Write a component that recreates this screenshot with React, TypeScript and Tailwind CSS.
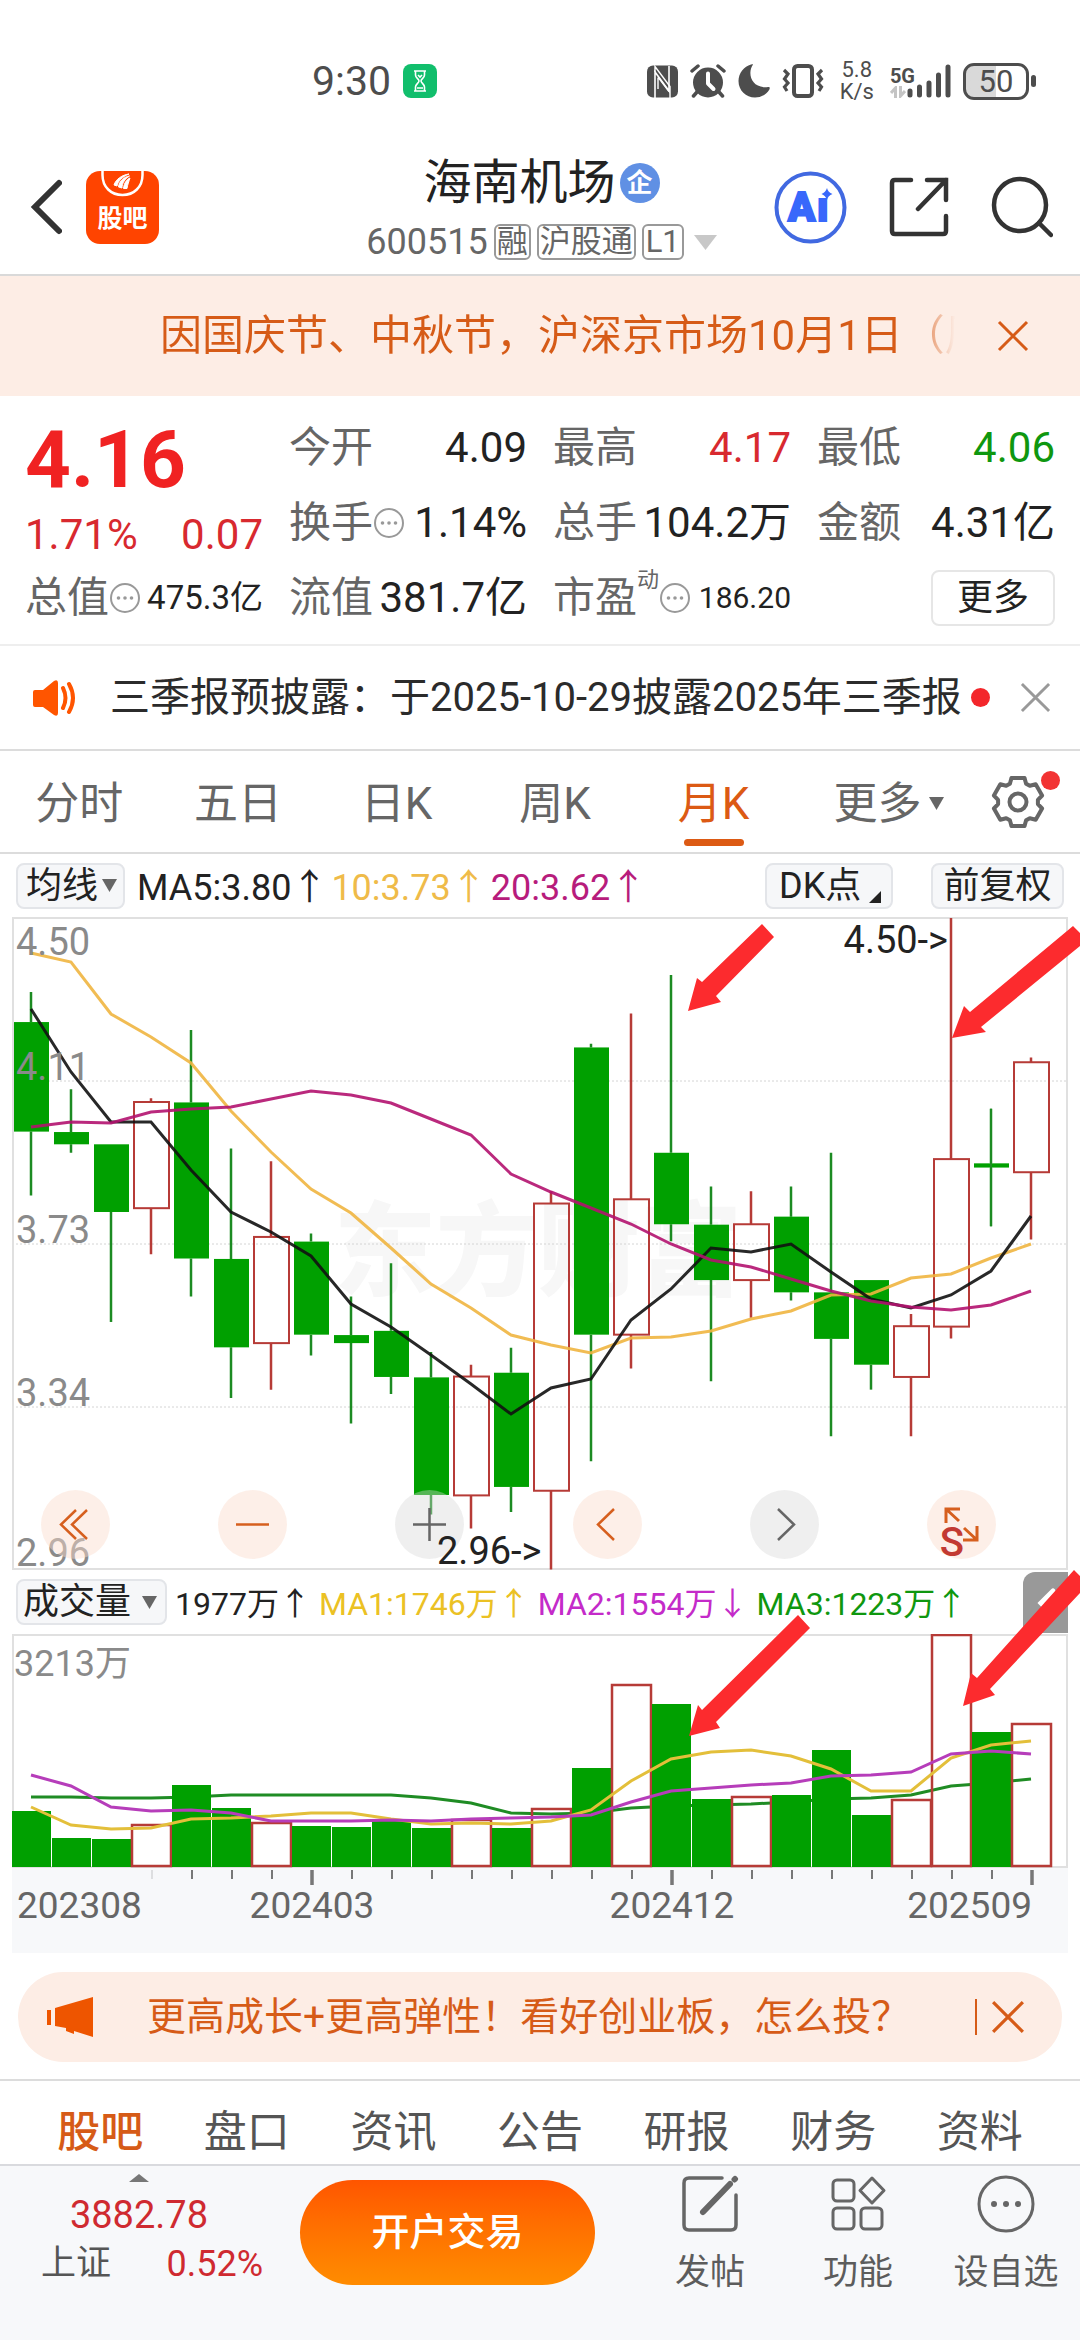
import React from "react";

type Candle = [number, number, number, number, boolean];

// [high, body top, body bottom, low, rising]
const CANDLES: Candle[] = [
  [4.325, 4.254, 3.995, 3.844, false],
  [4.095, 3.994, 3.965, 3.945, false],
  [3.965, 3.965, 3.805, 3.545, false],
  [4.074, 4.065, 3.814, 3.705, true],
  [4.235, 4.064, 3.695, 3.605, false],
  [3.955, 3.694, 3.485, 3.365, false],
  [3.925, 3.746, 3.495, 3.385, true],
  [3.754, 3.735, 3.515, 3.466, false],
  [3.605, 3.514, 3.495, 3.305, false],
  [3.684, 3.524, 3.415, 3.375, false],
  [3.474, 3.414, 3.136, 3.09, false],
  [3.444, 3.416, 3.135, 3.057, true],
  [3.484, 3.425, 3.155, 3.096, false],
  [3.854, 3.825, 3.146, 2.96, true],
  [4.203, 4.194, 3.515, 3.216, false],
  [4.274, 3.835, 3.515, 3.435, true],
  [4.365, 3.945, 3.776, 3.736, false],
  [3.865, 3.775, 3.644, 3.405, false],
  [3.854, 3.776, 3.644, 3.555, true],
  [3.865, 3.794, 3.615, 3.596, false],
  [3.945, 3.615, 3.505, 3.275, false],
  [3.644, 3.644, 3.444, 3.385, false],
  [3.564, 3.535, 3.415, 3.275, true],
  [4.5, 3.93, 3.534, 3.506, true],
  [4.049, 3.92, 3.91, 3.771, false],
  [4.17, 4.159, 3.899, 3.74, true],
];

const MA5 = [92, 155, 205, 205, 253, 295, 315, 339, 387, 410, 438, 467, 497, 471, 462, 403, 372, 331, 335, 327, 355, 382, 391, 378, 354, 299];
const MA10 = [36, 45, 97, 120, 146, 194, 235, 272, 296, 331, 367, 391, 418, 428, 436, 421, 420, 414, 402, 394, 378, 377, 361, 357, 341, 327];
const MA20 = [210, 205, 206, 195, 192, 190, 182, 174, 178, 186, 202, 218, 257, 275, 291, 307, 327, 343, 350, 362, 374, 384, 390, 393, 388, 374];

const VOLUMES = [56, 29, 28, 42, 82, 59, 44, 41, 40, 48, 39, 47, 39, 58, 99, 182, 163, 68, 70, 72, 117, 52, 67, 232, 135, 143];
const VMA1 = [173, 191, 195, 194, 185, 184, 182, 179, 179, 185, 190, 189, 190, 187, 176, 147, 125, 118, 116, 122, 135, 157, 157, 124, 111, 107];
const VMA2 = [141, 152, 173, 177, 176, 179, 187, 187, 187, 186, 187, 185, 184, 183, 181, 168, 157, 154, 151, 149, 142, 141, 138, 120, 117, 120];
const VMA3 = [163, 163, 164, 164, 163, 161, 161, 161, 161, 161, 164, 169, 179, 180, 179, 174, 172, 171, 170, 168, 165, 164, 161, 152, 149, 145];

const GREEN = "#00a000";
const WICK_GREEN = "#1c8b22";
const RED = "#b63b37";

const cx = (i: number) => 19 + 40 * i;
const py = (price: number) => 1 + (4.5 - price) * 423;
const line = (ys: number[]) => ys.map((y, i) => `${cx(i)},${y}`).join(" ");

function Arrow({ down = false }: { down?: boolean }) {
  return <span className="font-['Noto_Sans_CJK_SC']">{down ? "↓" : "↑"}</span>;
}

function Triangle({ className }: { className: string }) {
  return (
    <svg viewBox="0 0 16 14" preserveAspectRatio="none" className={className} aria-hidden="true">
      <path d="M0 0H16L8 14Z" fill="currentColor" />
    </svg>
  );
}

function Cross({ className, width = 3 }: { className: string; width?: number }) {
  return (
    <svg viewBox="0 0 32 32" className={className} fill="none" stroke="currentColor" strokeWidth={width} aria-hidden="true">
      <path d="M2 2L30 30M30 2L2 30" />
    </svg>
  );
}

function Info() {
  return (
    <svg viewBox="0 0 32 32" className="size-8 shrink-0 text-[#999999]" aria-hidden="true">
      <circle cx="16" cy="16" r="14" fill="none" stroke="currentColor" strokeWidth="2" />
      <circle cx="9.500" cy="16" r="1.800" fill="currentColor" />
      <circle cx="16" cy="16" r="1.800" fill="currentColor" />
      <circle cx="22.500" cy="16" r="1.800" fill="currentColor" />
    </svg>
  );
}

function StatusBar() {
  return (
    <div className="flex h-[140px] items-center justify-between pt-[22px] pr-[44px] pl-[312px] text-[#4d4d4d]">
      <div className="flex items-center gap-3">
        <span className="text-[41px] leading-none">9:30</span>
        <svg viewBox="0 0 34 34" className="size-[34px]" aria-hidden="true">
          <rect width="34" height="34" rx="8" fill="#11be6c" />
          <g fill="none" stroke="#fff" strokeWidth="1.600">
            <path d="M11 7H23M11 27H23M12.500 7V11C12.500 14 16 15 16 17C16 19 12.500 20 12.500 23V27M21.500 7V11C21.500 14 18 15 18 17C18 19 21.500 20 21.500 23V27" />
            <path d="M15 11L17 13L19 11M14 24H20" />
          </g>
        </svg>
      </div>
      <div className="flex items-center gap-3">
        <svg viewBox="0 0 31 33" className="h-[33px] w-[31px]" aria-hidden="true">
          <rect y="0.500" width="31" height="32" rx="6" fill="currentColor" />
          <path d="M8 33V7L22 26V1" fill="none" stroke="#fff" strokeWidth="1.600" />
          <path d="M8 7V1.500L23 21.500V33M11 13V24M11 12L22 26.500" fill="none" stroke="#fff" strokeWidth="1.400" />
        </svg>
        <svg viewBox="0 0 36 34" className="h-[34px] w-9" aria-hidden="true">
          <circle cx="18" cy="18.500" r="15" fill="currentColor" />
          <g fill="none" stroke="currentColor" strokeWidth="3.500" strokeLinecap="round">
            <path d="M2 7L8 2M34 7L28 2M7 28L3.500 32M29 28L32.500 32" />
          </g>
          <path d="M18 9.500V19.500L23.500 25" fill="none" stroke="#fff" strokeWidth="4" strokeLinecap="round" strokeLinejoin="round" />
        </svg>
        <svg viewBox="0 0 32 34" className="h-[34px] w-8" aria-hidden="true">
          <path d="M15 0.500C9 9 13 25 30 23C32 22.700 32 24 31.400 25.500C28 31 22.500 33.500 17 33.500C8 33.500 0.500 26.500 0.500 17C0.500 9 6 2.500 13 0.500C14.500 0 15.500 0 15 0.500Z" fill="currentColor" />
        </svg>
        <svg viewBox="0 0 42 34" className="h-[34px] w-[42px]" fill="none" stroke="currentColor" aria-hidden="true">
          <rect x="12" y="2" width="18" height="30" rx="3.500" strokeWidth="4" />
          <path d="M2 6L6 10L2.500 15L6 19L2.500 23L5 27M40 6L36 10L39.500 15L36 19L39.500 23L37 27" strokeWidth="3.200" />
        </svg>
        <div className="mx-1 flex flex-col items-center text-[22px] leading-[22px]">
          <span>5.8</span>
          <span>K/s</span>
        </div>
        <div className="flex items-end">
          <div className="flex flex-col">
            <span className="text-[20px] leading-5 font-bold">5G</span>
            <svg viewBox="0 0 16 12" className="h-3 w-4" fill="none" stroke="#c4c4c4" strokeWidth="3" aria-hidden="true">
              <path d="M1 7L5.500 2V12M10.500 0V10L15 5" />
            </svg>
          </div>
          <svg viewBox="0 0 44 34" className="-ml-2 h-[34px] w-11" stroke="currentColor" strokeWidth="5" strokeLinecap="round" aria-hidden="true">
            <path d="M3 27V31M12.500 23V31M22 19V31M31.500 11V31M41 3V31" />
          </svg>
        </div>
        <div className="flex items-center gap-[2px]">
          <div className="flex h-[37px] w-[66px] items-center justify-center rounded-[11px] border-[3px] border-[#4d4d4d] bg-linear-to-r from-[#d9d9d9] from-50% to-white to-50% text-[31px] leading-none">
            50
          </div>
          <span className="h-3 w-[5px] rounded-full bg-[#4d4d4d]" />
        </div>
      </div>
    </div>
  );
}

function Header() {
  return (
    <header className="grid h-[136px] grid-cols-[1fr_auto_1fr] items-center border-b-2 border-[#d9d9d9] pr-[27px] pl-[30px]">
      <div className="flex items-center gap-[24px]">
        <button aria-label="返回">
          <svg viewBox="0 0 32 56" className="h-14 w-8" fill="none" stroke="#333" strokeWidth="6" strokeLinecap="round" aria-hidden="true">
            <path d="M29 4L5 28L29 52" />
          </svg>
        </button>
        <a href="#guba" aria-label="股吧">
          <svg viewBox="0 0 73 73" className="size-[73px]" aria-hidden="true">
            <rect width="73" height="73" rx="14" fill="#ff4400" />
            <path d="M16.500 0V4C16.500 16 25 24 36.500 24C48 24 56.500 16 56.500 4V0" fill="none" stroke="#fff" strokeWidth="2.500" />
            <path d="M28 14C30 8 36 4 43 3C36 6 32 10 31 15ZM32.500 16C33 10 38 6 43.500 5C39 8 36 12 36 17ZM37.500 17.500C38 12 41 8 44 7C43 10 41.500 14 41 17.500Z" fill="#fff" stroke="#fff" />
            <text x="36.500" y="56" textAnchor="middle" fontSize="25" fontWeight="700" fill="#fff">股吧</text>
          </svg>
        </a>
      </div>
      <div className="flex flex-col items-center pt-3">
        <div className="flex h-[58px] items-center gap-1 text-[#222222]">
          <h1 className="text-[48px] leading-[56px]">海南机场</h1>
          <span className="flex size-10 items-center justify-center rounded-full bg-[#6090e4] text-[26px] leading-none font-bold text-white">企</span>
        </div>
        <button className="flex h-[60px] items-center gap-[6px] text-[32px] leading-9 text-[#666666]">
          <span className="text-[36px]">600515</span>
          <span className="h-9 rounded-md border-2 border-[#999999] px-px text-[31px] leading-8">融</span>
          <span className="h-9 rounded-md border-2 border-[#999999] px-px text-[31px] leading-8">沪股通</span>
          <span className="h-9 rounded-md border-2 border-[#999999] px-[2px] text-[31px] leading-8">L1</span>
          <Triangle className="ml-1 h-[15px] w-[23px] text-[#c8c8c8]" />
        </button>
      </div>
      <div className="flex items-center justify-end gap-[42px]">
        <button aria-label="Ai">
          <svg viewBox="0 0 73 73" className="size-[73px]" aria-hidden="true">
            <circle cx="36.500" cy="36.500" r="34" fill="#fff" stroke="#4169e1" strokeWidth="4" />
            <g fill="#3868fb" stroke="#3868fb" strokeWidth="2" fontSize="40" fontWeight="900">
              <text x="14" y="50">A</text>
              <text x="43" y="50">ı</text>
            </g>
            <path d="M53 17Q54 21.500 58.500 23Q54 24.500 53 29Q51.500 24.500 47.500 23Q51.500 21.500 53 17Z" fill="#3868fb" />
          </svg>
        </button>
        <button aria-label="分享">
          <svg viewBox="0 0 60 60" className="size-[60px]" fill="none" stroke="#333" strokeWidth="4.500" strokeLinecap="round" aria-hidden="true">
            <path d="M22 3H6Q3 3 3 6V54Q3 57 6 57H54Q57 57 57 54V39M38 3H57V23M57 3L29 32" />
          </svg>
        </button>
        <button aria-label="搜索">
          <svg viewBox="0 0 62 62" className="size-[62px]" fill="none" stroke="#333" strokeWidth="4.500" strokeLinecap="round" aria-hidden="true">
            <circle cx="29" cy="29" r="26" />
            <path d="M48 47L60 59" />
          </svg>
        </button>
      </div>
    </header>
  );
}

function Holiday() {
  return (
    <div className="flex h-[120px] items-center bg-[#fdede5] pr-[51px] pl-[160px] text-[#d65b17]">
      <p className="min-w-0 flex-1 overflow-hidden bg-linear-to-r from-[#d65b17] from-94% to-transparent to-100% bg-clip-text text-[42px] leading-[60px] whitespace-nowrap text-transparent">
        因国庆节、中秋节，沪深京市场10月1日（周三）
      </p>
      <button aria-label="关闭" className="ml-[42px]">
        <Cross className="size-8" />
      </button>
    </div>
  );
}

function Stat({ label, value, info, tone = "text-[#222222]", size = "text-[42px]", sup }: { label: string; value: string; info?: boolean; tone?: string; size?: string; sup?: string }) {
  return (
    <div className="flex h-[75px] items-center justify-between whitespace-nowrap">
      <dt className="flex items-center text-[42px] text-[#666666]">
        {label}
        {sup && <span className="mb-9 text-[22px]">{sup}</span>}
        {info && <Info />}
      </dt>
      <dd className={`${size} ${tone}`}>{value}</dd>
    </div>
  );
}

function Quote() {
  return (
    <dl className="grid grid-cols-4 gap-x-[26px] border-b-2 border-[#eeeeee] pt-[14px] pr-[25px] pb-[9px] pl-[25px] leading-none">
      <div className="row-span-2 flex flex-col">
        <dt className="flex h-[100px] items-center text-[80px] font-bold text-[#f02222]">4.16</dt>
        <dd className="flex h-[50px] items-center justify-between text-[42px] text-[#d8292f]">
          <span>1.71%</span>
          <span>0.07</span>
        </dd>
      </div>
      <Stat label="今开" value="4.09" />
      <Stat label="最高" value="4.17" tone="text-[#d8292f]" />
      <Stat label="最低" value="4.06" tone="text-[#0f970f]" />
      <Stat label="换手" value="1.14%" info />
      <Stat label="总手" value="104.2万" />
      <Stat label="金额" value="4.31亿" />
      <Stat label="总值" value="475.3亿" info size="text-[33px]" />
      <Stat label="流值" value="381.7亿" />
      <Stat label="市盈" value="186.20" info sup="动" size="text-[30px]" />
      <div className="flex h-[75px] items-center justify-end">
        <button className="h-14 w-[124px] rounded-lg border-2 border-[#e6e6e6] text-[36px] text-[#222222]">更多</button>
      </div>
    </dl>
  );
}

function Notice() {
  return (
    <div className="flex h-[105px] items-center border-b-2 border-[#dcdcdc] pr-[29px] pl-[32px]">
      <svg viewBox="0 0 46 38" className="h-[38px] w-[46px] shrink-0" aria-hidden="true">
        <path d="M3 11H11L22 2Q26 0 26 4V34Q26 38 22 36L11 28H3Q1 28 1 26V13Q1 11 3 11Z" fill="#ff5500" />
        <path d="M31 9Q36 19 31 29M37 5Q45 19 37 33" fill="none" stroke="#ff5500" strokeWidth="4" strokeLinecap="round" />
      </svg>
      <a href="#report" className="ml-8 min-w-0 flex-1 text-[40px] leading-[60px] whitespace-nowrap text-[#2b2b2b]">
        三季报预披露：于2025-10-29披露2025年三季报
      </a>
      <span className="mr-[30px] size-[19px] shrink-0 rounded-full bg-[#f3262b]" />
      <button aria-label="关闭">
        <Cross className="size-[31px] text-[#999999]" />
      </button>
    </div>
  );
}

const gear = Array.from({ length: 6 }, (_, k) =>
  [[20, -24], [25, -15], [25, 15], [20, 24]].map(([r, d]) => {
    const a = ((k * 60 - 90 + d) * Math.PI) / 180;
    return `${(28 + r * Math.cos(a)).toFixed(1)},${(28 + r * Math.sin(a)).toFixed(1)}`;
  }).join(" ")
).join(" ");

function PeriodTabs() {
  const tabs = ["分时", "五日", "日K", "周K", "月K"];
  return (
    <nav className="flex h-[103px] border-b-2 border-[#dcdcdc] text-[44px] text-[#666666]">
      {tabs.map((t) => (
        <button key={t} className={t === "月K" ? "relative flex-1 pt-1 text-[#dc5a14]" : "relative flex-1 pt-1"}>
          {t}
          {t === "月K" && <span className="absolute bottom-[6px] left-1/2 h-[7px] w-[60px] -translate-x-1/2 rounded-full bg-[#dc5a14]" />}
        </button>
      ))}
      <button className="flex w-[172px] items-center justify-center gap-2 pt-1 pl-5">
        更多
        <Triangle className="h-[13px] w-[15px]" />
      </button>
      <button aria-label="设置" className="relative flex w-[115px] items-center justify-center pr-2">
        <svg viewBox="0 0 56 56" className="size-14" fill="none" stroke="#666" strokeWidth="4" strokeLinejoin="round" aria-hidden="true">
          <polygon points={gear} />
          <circle cx="28" cy="28" r="8.500" />
        </svg>
        <span className="absolute top-5 right-5 size-[19px] rounded-full bg-[#f23333]" />
      </button>
    </nav>
  );
}

const chip = "h-[46px] rounded-lg border-2 border-[#e3e5e9] bg-[#f6f7f9] text-[36px] leading-[42px] text-[#222222]";

function Picker({ label, options, box, tri }: { label: string; options: string[]; box: string; tri: string }) {
  return (
    <label className="relative flex items-center">
      <select aria-label={label} className={`${chip} appearance-none ${box}`}>
        {options.map((o) => (
          <option key={o}>{o}</option>
        ))}
      </select>
      <Triangle className={`pointer-events-none absolute h-[13px] w-[15px] text-[#666666] ${tri}`} />
    </label>
  );
}

function MaRow() {
  return (
    <div className="flex h-[63px] items-center px-4 text-[36px] leading-none whitespace-nowrap">
      <Picker label="主图指标" options={["均线", "布林"]} box="w-[109px] pl-2" tri="right-[8px]" />
      <div className="ml-3 flex flex-1 gap-1">
        <span className="text-[#222222]">MA5:3.80<Arrow /></span>
        <span className="text-[#efbb49]">10:3.73<Arrow /></span>
        <span className="text-[#b71c7c]">20:3.62<Arrow /></span>
      </div>
      <button className={`${chip} flex w-[128px] items-end pl-3`}>
        DK点
        <svg viewBox="0 0 12 12" className="mb-1 ml-2 size-3" aria-hidden="true"><path d="M12 0V12H0Z" fill="#222" /></svg>
      </button>
      <button className={`${chip} ml-[38px] w-[133px] text-center`}>前复权</button>
    </div>
  );
}

const round = "flex size-[69px] items-center justify-center rounded-full";

function ChartButton({ label, warm, children }: { label: string; warm?: boolean; children: React.ReactNode }) {
  return (
    <button aria-label={label} className={warm ? `${round} bg-[#fbdccb]/45 text-[#d65f1e]` : `${round} bg-[#d8d8d8]/40 text-[#666666]`}>
      <svg viewBox="0 0 69 69" className="size-full" fill="none" stroke="currentColor" strokeWidth="2.500" aria-hidden="true">
        {children}
      </svg>
    </button>
  );
}

function PriceChart() {
  return (
    <div className="relative mx-3 text-[38px] leading-none text-[#8a8a8a]">
      <svg viewBox="0 0 1056 653" className="block w-full" role="img" aria-label="月K线">
        <text x="322" y="371" fontSize="102" fontWeight="900" fill="#f7f7f7">东方财富</text>
        <path d="M0 164H1056M0 327H1056M0 490H1056" stroke="#d4d4d4" strokeWidth="1" strokeDasharray="2 2" />
        <rect x="1" y="1" width="1054" height="651" fill="none" stroke="#e0e0e0" strokeWidth="2" />
        {CANDLES.map(([h, t, b, l, up], i) => (
          <g key={i}>
            <path d={`M${cx(i)} ${py(h)}V${py(t)}M${cx(i)} ${py(b)}V${py(l)}`} stroke={up ? RED : WICK_GREEN} strokeWidth="2.500" />
            {up ? (
              <rect x={cx(i) - 17} y={py(t)} width="35" height={py(b) - py(t)} fill="none" stroke={RED} strokeWidth="2" />
            ) : (
              <rect x={cx(i) - 17} y={py(t)} width="35" height={py(b) - py(t)} fill={GREEN} />
            )}
          </g>
        ))}
        <path d={`M${cx(24)} ${py(4.049)}V${py(3.771)}`} stroke={WICK_GREEN} strokeWidth="2" />
        <g fill="none" strokeWidth="3" strokeOpacity="0.9">
          <polyline points={line(MA10)} stroke="#efb540" />
          <polyline points={line(MA5)} stroke="#111" />
          <polyline points={line(MA20)} stroke="#b3126f" />
        </g>
      </svg>
      <span className="absolute top-[6px] left-1">4.50</span>
      <span className="absolute top-[20%] left-1">4.11</span>
      <span className="absolute top-[45%] left-1">3.73</span>
      <span className="absolute top-[70%] left-1">3.34</span>
      <span className="absolute -bottom-[2px] left-1">2.96</span>
      <div className="absolute right-[72px] bottom-[11px] left-[29px] flex justify-between">
        <ChartButton label="最早" warm><path d="M35 20L20 34.500L35 49M46 20L31 34.500L46 49" /></ChartButton>
        <ChartButton label="缩小" warm><path d="M18 34.500H51" /></ChartButton>
        <ChartButton label="放大"><path d="M18 34.500H51M34.500 18V51" /></ChartButton>
        <ChartButton label="向左" warm><path d="M41 19L25 34.500L41 50" /></ChartButton>
        <ChartButton label="向右"><path d="M28 19L44 34.500L28 50" /></ChartButton>
        <ChartButton label="全屏" warm>
          <path d="M19 33V19H33M19 19L32 31M50 36V50H36M50 50L37 38" strokeWidth="3" />
        </ChartButton>
        <span className="absolute right-[32px] -bottom-[4px] text-[40px] font-medium text-[#c23a33]">S</span>
      </div>
      <span className="absolute top-1 right-[120px] text-[#222222]">4.50-&gt;</span>
      <span className="absolute bottom-0 left-[425px] text-[#222222]">2.96-&gt;</span>
    </div>
  );
}

function VolumeHeader() {
  return (
    <div className="mx-3 flex h-16 items-center pl-1 text-[32px] leading-none whitespace-nowrap">
      <Picker label="副图指标" options={["成交量", "成交额"]} box="w-[151px] pl-[5px]" tri="right-[10px]" />
      <div className="ml-2 flex flex-1 gap-2">
        <span className="text-[#222222]">1977万<Arrow /></span>
        <span className="text-[#ebc124]">MA1:1746万<Arrow /></span>
        <span className="text-[#c42bc9]">MA2:1554万<Arrow down /></span>
        <span className="text-[#0f970f]">MA3:1223万<Arrow /></span>
      </div>
      <button aria-label="收起" className="h-[61px] w-[45px] shrink-0 rounded-tl-xl bg-[#999999]">
        <svg viewBox="0 0 45 61" className="size-full" fill="none" stroke="#fff" strokeWidth="5" strokeLinecap="round" aria-hidden="true">
          <path d="M30 19L18 31L30 43" />
        </svg>
      </button>
    </div>
  );
}

function VolumeChart() {
  return (
    <div className="relative mx-3">
      <svg viewBox="0 0 1056 234" className="block w-full" role="img" aria-label="成交量">
        <rect x="1" y="1" width="1054" height="232" fill="none" stroke="#e0e0e0" strokeWidth="2" />
        <polyline points={line(VMA3)} fill="none" stroke="#1f8c24" strokeWidth="3" />
        {VOLUMES.map((v, i) =>
          CANDLES[i][4] ? (
            <rect key={i} x={cx(i) - 19} y={233 - v} width="39" height={v - 1} fill="none" stroke={RED} strokeWidth="2.500" />
          ) : (
            <rect key={i} x={cx(i) - 19} y={233 - v} width="39" height={v} fill={GREEN} />
          )
        )}
        <g fill="none" strokeWidth="3">
          <polyline points={line(VMA1)} stroke="#e3bf3a" />
          <polyline points={line(VMA2)} stroke="#b63dba" />
        </g>
      </svg>
      <span className="absolute top-2 left-[2px] text-[36px] leading-11 text-[#8a8a8a]">3213万</span>
      <div className="relative h-[85px] bg-[#f7f8fa] text-[37px] leading-none text-[#666666]">
        <svg viewBox="0 0 1056 20" className="block w-full" stroke="#777" aria-hidden="true">
          {CANDLES.map((_, i) =>
            i < 3 ? null : i % 9 === 7 ? (
              <path key={i} d={`M${cx(i) + 1} 2V17`} strokeWidth="3.500" />
            ) : (
              <path key={i} d={`M${cx(i) + 1} 2V11`} strokeWidth="2" strokeOpacity={i === 3 ? 0.2 : 1} />
            )
          )}
        </svg>
        <span className="absolute top-[19px] left-[5px]">202308</span>
        <span className="absolute top-[19px] left-[300px] -translate-x-1/2">202403</span>
        <span className="absolute top-[19px] left-[660px] -translate-x-1/2">202412</span>
        <span className="absolute top-[19px] right-[36px]">202509</span>
      </div>
    </div>
  );
}

function Pointers() {
  return (
    <svg viewBox="0 0 1080 1036" className="pointer-events-none absolute inset-x-0 top-0 w-full" fill="#fc2b2e" aria-hidden="true">
      <path d="M688 94L697 61L702 65L762 7L774 20L716 79L721 85Z" />
      <path d="M952 121L964 89L970 95L1073 9L1080 16V29L981 110L986 115Z" />
      <path d="M689 819L698 788L702 793L798 698L810 711L716 805L720 811Z" />
      <path d="M963 789L971 756L977 761L1074 653L1080 659V676L990 772L995 778Z" />
    </svg>
  );
}

function Promo() {
  return (
    <div className="mx-[18px] mt-[19px] mb-[17px] flex h-[90px] items-center rounded-full bg-[#fdede5] pr-[37px] pl-[29px] text-[#d65b17]">
      <svg viewBox="0 0 46 40" className="h-10 w-[46px] shrink-0" fill="#ee5500" aria-hidden="true">
        <path d="M0 13H4V28H0ZM8 11L46 0V40L27 34V37L19 34V31L8 29Z" />
      </svg>
      <a href="#promo" className="ml-[54px] flex-1 text-[39px] whitespace-nowrap">更高成长+更高弹性！看好创业板，怎么投？</a>
      <span className="mr-[14px] h-9 w-[2px] bg-[#d65b17]" />
      <button aria-label="关闭">
        <Cross className="size-[34px]" />
      </button>
    </div>
  );
}

function SectionTabs() {
  const tabs = ["股吧", "盘口", "资讯", "公告", "研报", "财务", "资料"];
  return (
    <nav className="flex h-[85px] border-t-2 border-[#dcdcdc] px-[27px] pt-[19px] text-[43px] leading-[64px] text-[#555555]">
      {tabs.map((t, i) => (
        <button key={t} className={i === 0 ? "flex-1 font-medium text-[#d65b17]" : "flex-1"}>{t}</button>
      ))}
    </nav>
  );
}

function Action({ label, children }: { label: string; children: React.ReactNode }) {
  return (
    <button className="flex w-[148px] flex-col items-center gap-[15px] text-[35px] leading-[50px] whitespace-nowrap text-[#5c5c5c]">
      <svg viewBox="0 0 58 58" className="size-[58px]" fill="none" stroke="#666" strokeWidth="3" strokeLinecap="round" aria-hidden="true">
        {children}
      </svg>
      {label}
    </button>
  );
}

function BottomBar() {
  return (
    <footer className="flex min-h-[176px] flex-1 items-start border-t-2 border-[#d9dade] bg-[#f7f8fa]">
      <button className="ml-[41px] flex w-[222px] flex-col pt-2 text-[#cf2a30]">
        <Triangle className="mr-[26px] h-2 w-5 rotate-180 self-center text-[#777777]" />
        <span className="mt-[9px] mr-[26px] self-center text-[38px] leading-[48px]">3882.78</span>
        <span className="flex w-full justify-between text-[36px] leading-[50px]">
          <span className="text-[35px] text-[#555555]">上证</span>
          <span>0.52%</span>
        </span>
      </button>
      <button className="mt-[14px] ml-[37px] h-[105px] flex-1 rounded-full bg-linear-to-b from-[#ff5500] to-[#ff8c00] text-[38px] font-medium text-white">
        开户交易
      </button>
      <div className="ml-[41px] flex pt-[9px]">
        <Action label="发帖">
          <path d="M41 3H8Q3 3 3 8V50Q3 55 8 55H50Q55 55 55 50V20" strokeWidth="3.500" />
          <path d="M22 37L49 9" strokeWidth="6" />
          <path d="M53.500 4.500L54 4" strokeWidth="6" />
        </Action>
        <Action label="功能">
          <rect x="4" y="5" width="21" height="21" rx="4" />
          <rect x="4" y="33" width="21" height="21" rx="4" />
          <rect x="32" y="33" width="21" height="21" rx="4" />
          <path d="M43 3L55 15.500L43 28L31 15.500Z" strokeLinejoin="round" />
        </Action>
        <Action label="设自选">
          <circle cx="29" cy="29" r="27" />
          <path d="M17 29H17.010M29 29H29.010M41 29H41.010" strokeWidth="6" />
        </Action>
      </div>
    </footer>
  );
}

export default function App() {
  return (
    <div className="flex min-h-screen flex-col overflow-x-hidden bg-white font-[Roboto,'Noto_Sans_CJK_SC',sans-serif]">
      <StatusBar />
      <Header />
      <Holiday />
      <Quote />
      <Notice />
      <PeriodTabs />
      <MaRow />
      <section className="relative">
        <PriceChart />
        <VolumeHeader />
        <VolumeChart />
        <Pointers />
      </section>
      <Promo />
      <SectionTabs />
      <BottomBar />
    </div>
  );
}
